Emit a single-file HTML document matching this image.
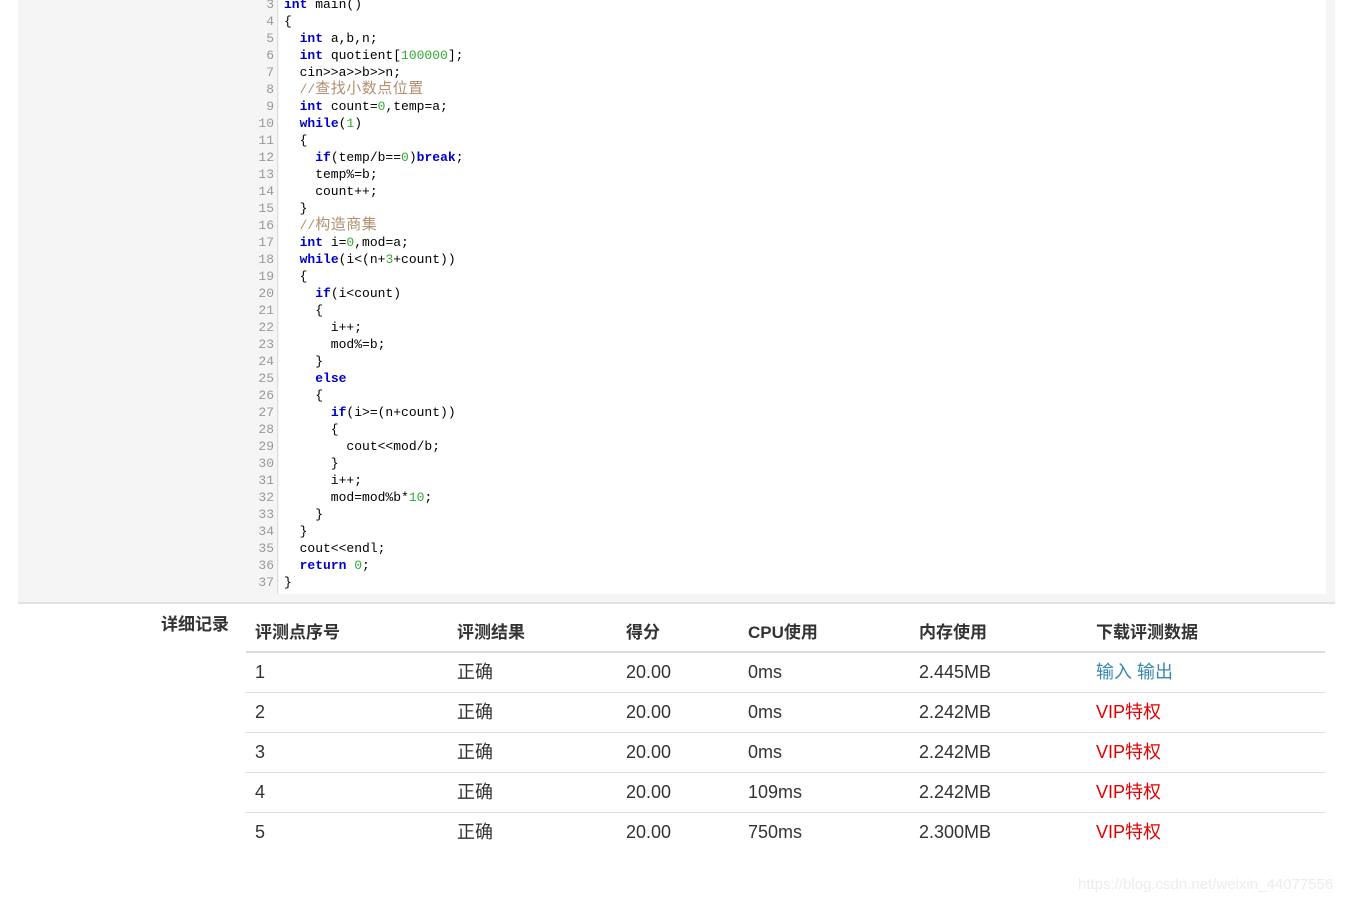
<!DOCTYPE html>
<html><head><meta charset="utf-8"><style>
body{margin:0;width:1359px;height:903px;background:#fff;position:relative;overflow:hidden;font-family:"Liberation Sans","Noto Sans CJK SC",sans-serif;}
#panel{position:absolute;left:18px;top:0;width:1317px;height:602px;background:#f5f5f5;border-bottom:2px solid #e2e2e2;}
#code{position:absolute;left:279px;top:0;width:1047px;height:594px;background:#fff;}
#gut{position:absolute;left:246px;top:0;width:31px;height:594px;border-right:1px solid #ddd;}
.ln{position:absolute;left:0;width:28px;text-align:right;color:#999;font:13px/17px "Liberation Mono","Noto Sans CJK SC",monospace;}
.cl{position:absolute;left:284px;white-space:pre;color:#000;font:13px/17px "Liberation Mono","Noto Sans CJK SC",monospace;}
.k{color:#0000cc;font-weight:bold}.n{color:#33aa33}.c{color:#b09070}
.cj{font-size:15px;letter-spacing:0.5px;line-height:17px}
.lab{position:absolute;left:161px;top:613px;font-size:17px;line-height:24px;font-weight:bold;color:#333;}
.th{position:absolute;top:621px;font-size:17px;line-height:24px;font-weight:bold;color:#333;}
.td{position:absolute;font-size:18px;line-height:20px;color:#333;}
.hl{position:absolute;left:246px;width:1079px;height:1px;background:#ddd;}
.vip{color:#e00000}.lnk{color:#3a87ad}
#wm{position:absolute;left:1078px;top:876px;font-size:15px;color:#ececec;}
</style></head><body>
<div id="panel"></div>
<div id="code"></div>
<div id="gut">
<div class="ln" style="top:-4px">3</div><div class="ln" style="top:13px">4</div><div class="ln" style="top:30px">5</div><div class="ln" style="top:47px">6</div><div class="ln" style="top:64px">7</div><div class="ln" style="top:81px">8</div><div class="ln" style="top:98px">9</div><div class="ln" style="top:115px">10</div><div class="ln" style="top:132px">11</div><div class="ln" style="top:149px">12</div><div class="ln" style="top:166px">13</div><div class="ln" style="top:183px">14</div><div class="ln" style="top:200px">15</div><div class="ln" style="top:217px">16</div><div class="ln" style="top:234px">17</div><div class="ln" style="top:251px">18</div><div class="ln" style="top:268px">19</div><div class="ln" style="top:285px">20</div><div class="ln" style="top:302px">21</div><div class="ln" style="top:319px">22</div><div class="ln" style="top:336px">23</div><div class="ln" style="top:353px">24</div><div class="ln" style="top:370px">25</div><div class="ln" style="top:387px">26</div><div class="ln" style="top:404px">27</div><div class="ln" style="top:421px">28</div><div class="ln" style="top:438px">29</div><div class="ln" style="top:455px">30</div><div class="ln" style="top:472px">31</div><div class="ln" style="top:489px">32</div><div class="ln" style="top:506px">33</div><div class="ln" style="top:523px">34</div><div class="ln" style="top:540px">35</div><div class="ln" style="top:557px">36</div><div class="ln" style="top:574px">37</div>
</div>
<div class="cl" style="top:-4px"><span class="k">int</span> main()</div>
<div class="cl" style="top:13px">{</div>
<div class="cl" style="top:30px">  <span class="k">int</span> a,b,n;</div>
<div class="cl" style="top:47px">  <span class="k">int</span> quotient[<span class="n">100000</span>];</div>
<div class="cl" style="top:64px">  cin&gt;&gt;a&gt;&gt;b&gt;&gt;n;</div>
<div class="cl" style="top:81px">  <span class="c">//<span class="cj">查找小数点位置</span></span></div>
<div class="cl" style="top:98px">  <span class="k">int</span> count=<span class="n">0</span>,temp=a;</div>
<div class="cl" style="top:115px">  <span class="k">while</span>(<span class="n">1</span>)</div>
<div class="cl" style="top:132px">  {</div>
<div class="cl" style="top:149px">    <span class="k">if</span>(temp/b==<span class="n">0</span>)<span class="k">break</span>;</div>
<div class="cl" style="top:166px">    temp%=b;</div>
<div class="cl" style="top:183px">    count++;</div>
<div class="cl" style="top:200px">  }</div>
<div class="cl" style="top:217px">  <span class="c">//<span class="cj">构造商集</span></span></div>
<div class="cl" style="top:234px">  <span class="k">int</span> i=<span class="n">0</span>,mod=a;</div>
<div class="cl" style="top:251px">  <span class="k">while</span>(i&lt;(n+<span class="n">3</span>+count))</div>
<div class="cl" style="top:268px">  {</div>
<div class="cl" style="top:285px">    <span class="k">if</span>(i&lt;count)</div>
<div class="cl" style="top:302px">    {</div>
<div class="cl" style="top:319px">      i++;</div>
<div class="cl" style="top:336px">      mod%=b;</div>
<div class="cl" style="top:353px">    }</div>
<div class="cl" style="top:370px">    <span class="k">else</span></div>
<div class="cl" style="top:387px">    {</div>
<div class="cl" style="top:404px">      <span class="k">if</span>(i&gt;=(n+count))</div>
<div class="cl" style="top:421px">      {</div>
<div class="cl" style="top:438px">        cout&lt;&lt;mod/b;</div>
<div class="cl" style="top:455px">      }</div>
<div class="cl" style="top:472px">      i++;</div>
<div class="cl" style="top:489px">      mod=mod%b*<span class="n">10</span>;</div>
<div class="cl" style="top:506px">    }</div>
<div class="cl" style="top:523px">  }</div>
<div class="cl" style="top:540px">  cout&lt;&lt;endl;</div>
<div class="cl" style="top:557px">  <span class="k">return</span> <span class="n">0</span>;</div>
<div class="cl" style="top:574px">}</div>

<div class="lab">详细记录</div>
<div class="th" style="left:255px">评测点序号</div>
<div class="th" style="left:457px">评测结果</div>
<div class="th" style="left:626px">得分</div>
<div class="th" style="left:748px">CPU使用</div>
<div class="th" style="left:919px">内存使用</div>
<div class="th" style="left:1096px">下载评测数据</div>
<div class="hl" style="top:651px;height:2px"></div>
<div class="hl" style="top:692px"></div>
<div class="hl" style="top:732px"></div>
<div class="hl" style="top:772px"></div>
<div class="hl" style="top:812px"></div>

<div class="td" style="left:255px;top:662px">1</div><div class="td" style="left:457px;top:662px">正确</div><div class="td" style="left:626px;top:662px">20.00</div><div class="td" style="left:748px;top:662px">0ms</div><div class="td" style="left:919px;top:662px">2.445MB</div><div class="td lnk" style="left:1096px;top:662px">输入 输出</div>
<div class="td" style="left:255px;top:702px">2</div><div class="td" style="left:457px;top:702px">正确</div><div class="td" style="left:626px;top:702px">20.00</div><div class="td" style="left:748px;top:702px">0ms</div><div class="td" style="left:919px;top:702px">2.242MB</div><div class="td vip" style="left:1096px;top:702px">VIP特权</div>
<div class="td" style="left:255px;top:742px">3</div><div class="td" style="left:457px;top:742px">正确</div><div class="td" style="left:626px;top:742px">20.00</div><div class="td" style="left:748px;top:742px">0ms</div><div class="td" style="left:919px;top:742px">2.242MB</div><div class="td vip" style="left:1096px;top:742px">VIP特权</div>
<div class="td" style="left:255px;top:782px">4</div><div class="td" style="left:457px;top:782px">正确</div><div class="td" style="left:626px;top:782px">20.00</div><div class="td" style="left:748px;top:782px">109ms</div><div class="td" style="left:919px;top:782px">2.242MB</div><div class="td vip" style="left:1096px;top:782px">VIP特权</div>
<div class="td" style="left:255px;top:822px">5</div><div class="td" style="left:457px;top:822px">正确</div><div class="td" style="left:626px;top:822px">20.00</div><div class="td" style="left:748px;top:822px">750ms</div><div class="td" style="left:919px;top:822px">2.300MB</div><div class="td vip" style="left:1096px;top:822px">VIP特权</div>
<div id="wm">https://blog.csdn.net/weixin_44077556</div>
</body></html>
